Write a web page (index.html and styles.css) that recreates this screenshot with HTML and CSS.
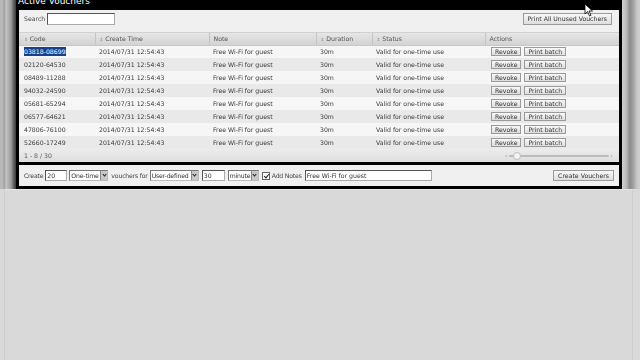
FILE: index.html
```html
<!DOCTYPE html>
<html>
<head>
<meta charset="utf-8">
<link rel="stylesheet" href="styles.css">
</head>
<body>
<div class="screen">
  <div class="top">
    <div class="edge edge-left"></div>
    <div class="center">
      <div class="panel panel-main">
        <div class="title"><span>Active Vouchers</span></div>
        <div class="toolbar">
          <span class="label">Search</span>
          <span class="field search"></span>
          <span class="spacer"></span>
          <span class="btn print-all">Print All Unused Vouchers</span>
        </div>
        <div class="grid">
          <table>
            <colgroup>
              <col class="c-code"><col class="c-time"><col class="c-note"><col class="c-dur"><col class="c-status"><col class="c-act">
            </colgroup>
            <thead>
              <tr><th><i>&#8661;</i> Code</th><th><i>&#8661;</i> Create Time</th><th>Note</th><th><i>&#8661;</i> Duration</th><th><i>&#8661;</i> Status</th><th>Actions</th></tr>
            </thead>
            <tbody>
              <tr><td class="selcell"><span class="sel">03818-08699</span></td><td>2014/07/31 12:54:43</td><td>Free Wi-Fi for guest</td><td>30m</td><td>Valid for one-time use</td><td><span class="btn sm">Revoke</span><span class="btn sm">Print batch</span></td></tr>
              <tr><td>02120-64530</td><td>2014/07/31 12:54:43</td><td>Free Wi-Fi for guest</td><td>30m</td><td>Valid for one-time use</td><td><span class="btn sm">Revoke</span><span class="btn sm">Print batch</span></td></tr>
              <tr><td>08489-11288</td><td>2014/07/31 12:54:43</td><td>Free Wi-Fi for guest</td><td>30m</td><td>Valid for one-time use</td><td><span class="btn sm">Revoke</span><span class="btn sm">Print batch</span></td></tr>
              <tr><td>94032-24590</td><td>2014/07/31 12:54:43</td><td>Free Wi-Fi for guest</td><td>30m</td><td>Valid for one-time use</td><td><span class="btn sm">Revoke</span><span class="btn sm">Print batch</span></td></tr>
              <tr><td>05681-65294</td><td>2014/07/31 12:54:43</td><td>Free Wi-Fi for guest</td><td>30m</td><td>Valid for one-time use</td><td><span class="btn sm">Revoke</span><span class="btn sm">Print batch</span></td></tr>
              <tr><td>06577-64621</td><td>2014/07/31 12:54:43</td><td>Free Wi-Fi for guest</td><td>30m</td><td>Valid for one-time use</td><td><span class="btn sm">Revoke</span><span class="btn sm">Print batch</span></td></tr>
              <tr><td>47806-76100</td><td>2014/07/31 12:54:43</td><td>Free Wi-Fi for guest</td><td>30m</td><td>Valid for one-time use</td><td><span class="btn sm">Revoke</span><span class="btn sm">Print batch</span></td></tr>
              <tr><td>52660-17249</td><td>2014/07/31 12:54:43</td><td>Free Wi-Fi for guest</td><td>30m</td><td>Valid for one-time use</td><td><span class="btn sm">Revoke</span><span class="btn sm">Print batch</span></td></tr>
            </tbody>
          </table>
          <div class="grid-foot">
            <span class="pager">1 - 8 / 30</span>
            <span class="spacer"></span>
            <span class="slider">
              <span class="arr">&#8249;</span>
              <span class="track"><span class="thumb"></span></span>
              <span class="arr">&#8250;</span>
            </span>
          </div>
        </div>
      </div>
      <div class="panel panel-create">
        <span class="label">Create</span>
        <span class="field num">20</span>
        <span class="select w-type"><span class="val">One-time</span><span class="drop"></span></span>
        <span class="label l-for">vouchers for</span>
        <span class="select w-user"><span class="val">User-defined</span><span class="drop"></span></span>
        <span class="field num2">30</span>
        <span class="select w-unit"><span class="val">minute</span><span class="drop"></span></span>
        <span class="check"></span>
        <span class="label l-notes">Add Notes</span>
        <span class="field notes">Free Wi-Fi for guest</span>
        <span class="spacer"></span>
        <span class="btn create">Create Vouchers</span>
      </div>
    </div>
    <div class="edge edge-right"></div>
  </div>
  <div class="below"></div>
  <svg class="cursor" width="9" height="14" viewBox="0 0 9 14"><path d="M1 1 L1 11 L3.5 8.5 L5.5 13 L7 12.3 L5 8 L8.5 8 Z" fill="#fff" stroke="#000" stroke-width="0.8"/></svg>
</div>
</body>
</html>
```

FILE: styles.css
```css
* { box-sizing: border-box; }
html, body { margin: 0; padding: 0; }
body {
  width: 640px;
  height: 360px;
  overflow: hidden;
  background: #d9d9d9;
  font-family: "DejaVu Sans", Verdana, sans-serif;
  font-size: 6.2px;
  color: #333;
}
.screen {
  position: relative;
  display: flex;
  flex-direction: column;
  height: 360px;
}
.top {
  display: flex;
  align-items: stretch;
  height: 189px;
}
.below {
  flex: 1;
  margin: 0 7px 0 4px;
  border-left: 1px solid #cdcdcd;
  border-right: 1px solid #cdcdcd;
  border-top: 1px solid #e6e6e6;
}
.edge-left {
  width: 16px;
  background: linear-gradient(to right, #b8b8b8 0, #b8b8b8 3px, #9a9a9a 4px, #c4c4c4 6px, #9c9c9c 11px, #5a5a5a 14px, #3a3a3a 16px);
}
.edge-right {
  width: 18px;
  background: linear-gradient(to right, #cfcfcf 0, #bdbdbd 4px, #8a8a8a 8px, #a8a8a8 12px, #c8c8c8 15px, #d0d0d0 18px);
}
.center {
  width: 606px;
  display: flex;
  flex-direction: column;
}
.panel {
  background: #f0f0f0;
  border: 3px solid #000;
}
.panel-main {
  border-top: 0;
}
.title {
  height: 10px;
  background: #000;
  color: #fff;
  overflow: hidden;
  margin: 0 -1px;
}
.title span {
  display: block;
  font-size: 9px;
  line-height: 10px;
  margin-top: -4px;
}
.toolbar, th, td, .grid-foot, .panel-create {
  filter: grayscale(1);
}
td.selcell { filter: none; }
.toolbar {
  height: 22px;
  display: flex;
  align-items: flex-start;
  padding: 3px 7px 0 5px;
  gap: 2px;
}
.toolbar .label { line-height: 12px; }
.spacer { flex: 1; }
.label { color: #444; white-space: nowrap; }
.field {
  display: inline-block;
  height: 11px;
  background: #fff;
  border: 1px solid #aaa;
  border-top-color: #555;
  border-left-color: #555;
  line-height: 9px;
  padding-left: 1px;
  color: #333;
  white-space: nowrap;
  overflow: hidden;
}
.search { width: 68px; height: 12px; }
.btn {
  display: inline-block;
  height: 11px;
  line-height: 9px;
  padding: 0 4px;
  border: 1px solid #9a9a9a;
  background: linear-gradient(#f8f8f8, #dedede);
  color: #333;
  white-space: nowrap;
}
.print-all { height: 12px; line-height: 10px; }
.grid {
  border-top: 1px solid #d0d0d0;
}
table {
  width: 600px;
  border-collapse: collapse;
  table-layout: fixed;
}
.c-code { width: 76px; }
.c-time { width: 114px; }
.c-note { width: 107px; }
.c-dur { width: 56px; }
.c-status { width: 113px; }
.c-act { width: 134px; }
th {
  height: 12px;
  padding: 0 0 0 4px;
  text-align: left;
  font-weight: normal;
  color: #555;
  background: linear-gradient(#e6e6e6, #d2d2d2);
  border-left: 1px solid #c4c4c4;
  border-bottom: 1px solid #c8c8c8;
  white-space: nowrap;
}
th:first-child { border-left: 0; padding-left: 5px; }
th i { font-style: normal; font-size: 4.5px; color: #888; }
td {
  height: 13px;
  padding: 0 0 0 4px;
  white-space: nowrap;
  overflow: hidden;
  color: #3a3a3a;
}
td:first-child { padding-left: 5px; }
tbody tr:nth-child(odd) td { background: #f6f6f6; }
tbody tr:nth-child(even) td { background: #e9e9e9; }
td:last-child { padding-left: 6px; }
.sel {
  background: #1b3f8c;
  color: #fff;
  padding: 1px 0;
}
.btn.sm {
  height: 9px;
  line-height: 7px;
  padding: 0 3px;
  margin-right: 3px;
  vertical-align: middle;
}
.grid-foot {
  height: 13px;
  display: flex;
  align-items: center;
  padding: 0 6px 0 5px;
  background: linear-gradient(#ececec, #dedede);
}
.pager { color: #555; }
.slider {
  display: flex;
  align-items: center;
  gap: 2px;
  width: 108px;
}
.arr { color: #888; font-size: 6px; }
.track {
  position: relative;
  flex: 1;
  height: 2px;
  background: #bbb;
  border-radius: 1px;
}
.thumb {
  position: absolute;
  left: 4px;
  top: -3px;
  width: 8px;
  height: 8px;
  border-radius: 50%;
  border: 1px solid #bbb;
  background: #f4f4f4;
}
.panel-create {
  border-top: 0;
  height: 24px;
  display: flex;
  align-items: center;
  padding: 0 4px 0 5px;
}
.panel-create .label { letter-spacing: -0.2px; }
.num { width: 22px; margin-left: 2px; }
.w-type { width: 39px; margin-left: 2px; }
.l-for { margin-left: 3px; }
.w-user { width: 49px; margin-left: 2px; }
.num2 { width: 23px; margin-left: 3px; }
.w-unit { width: 31px; margin-left: 3px; }
.check { margin-left: 3px; }
.l-notes { margin-left: 2px; }
.notes { width: 127px; margin-left: 3px; }
.select {
  display: inline-flex;
  height: 11px;
  background: #fff;
  border: 1px solid #777;
  border-right-color: #bbb;
  border-bottom-color: #bbb;
}
.select .val { flex: 1; line-height: 9px; padding-left: 1px; white-space: nowrap; overflow: hidden; letter-spacing: -0.2px; }
.select .drop {
  width: 7px;
  flex: none;
  background: #c8c8c8;
  border-left: 1px solid #888;
  position: relative;
}
.select .drop::after {
  content: "";
  position: absolute;
  left: 1.5px;
  top: 2px;
  width: 2px;
  height: 2px;
  border-right: 1px solid #222;
  border-bottom: 1px solid #222;
  transform: rotate(45deg);
}
.check {
  width: 8px;
  height: 8px;
  border: 1px solid #666;
  background: #fff;
  position: relative;
}
.check::after {
  content: "";
  position: absolute;
  left: 2px;
  top: 0px;
  width: 2px;
  height: 4px;
  border-right: 1px solid #222;
  border-bottom: 1px solid #222;
  transform: rotate(40deg);
}
.create { margin-right: 1px; }
.cursor {
  position: absolute;
  left: 584px;
  top: 3px;
}
```
